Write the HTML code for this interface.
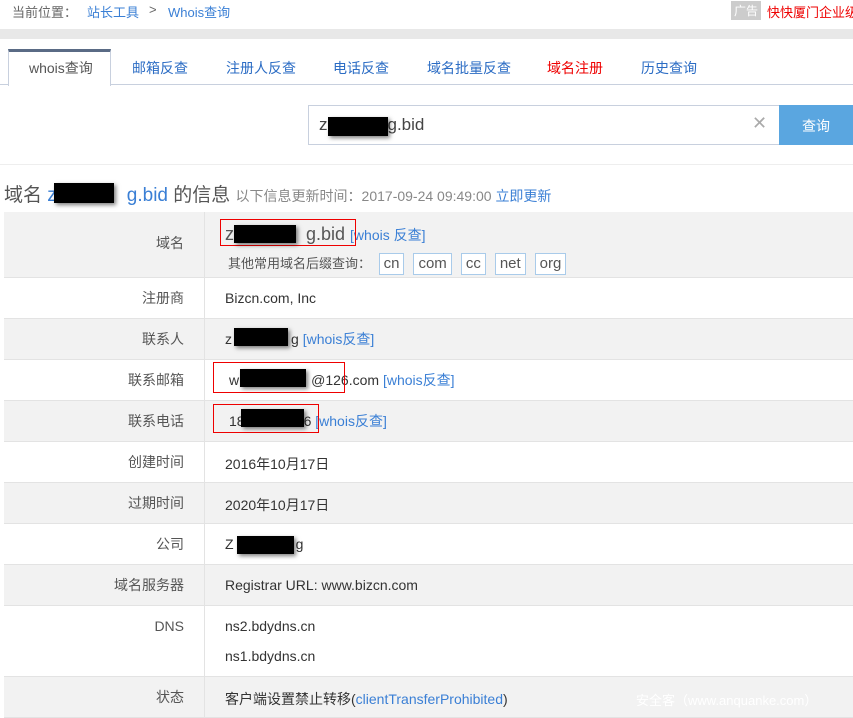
<!DOCTYPE html>
<html><head><meta charset="utf-8"><style>
*{margin:0;padding:0;box-sizing:border-box}
body{width:853px;height:718px;overflow:hidden;background:#fff;font-family:"Liberation Sans","Noto Sans CJK SC",sans-serif;font-size:14px;color:#333;position:relative}
.a{position:absolute;white-space:nowrap}
.blue{color:#3a7fd5}
.g{display:inline-block}
.blk{position:absolute;background:#000;box-shadow:2px 2px 4px rgba(0,0,0,.5)}
.row{position:absolute;left:4px;width:849px;background:#f2f2f2;border-bottom:1px solid #e3e3e3}
.row.w{background:#fff}
.row .l{position:absolute;left:0;width:201px;height:100%;border-right:1px solid #e3e3e3;text-align:right;padding-right:20px;color:#555;font-size:14px}
.row .v{position:absolute;left:221px;font-size:14px;color:#333;white-space:nowrap}
.tab{position:absolute;top:58px;font-size:14px;color:#2b6cc4}
.sfx{display:inline-block;border:1px solid #a9cbea;padding:0 4px;height:22px;line-height:20px;margin-right:9px;color:#555;font-size:15px;background:#fff}
</style></head><body>
<div class="a" style="left:12px;top:2px;color:#666;font-size:13px">当前位置：</div>
<div class="a blue" style="left:87px;top:2px;font-size:13px">站长工具</div>
<div class="a" style="left:149px;top:2px;color:#666;font-size:13px">&gt;</div>
<div class="a blue" style="left:168px;top:2px;font-size:13px">Whois查询</div>
<div class="a" style="left:731px;top:1px;background:#ccc;color:#fff;font-size:12px;padding:1px 3px">广告</div>
<div class="a" style="left:767px;top:2px;color:#e00;font-size:13px">快快厦门企业级</div>
<div class="a" style="left:0;top:29px;width:853px;height:10px;background:#e8e8e8"></div>
<div class="a" style="left:0;top:84px;width:853px;height:1px;background:#c8d0de"></div>
<div class="a" style="left:8px;top:49px;width:103px;height:37px;border:1px solid #c8d0de;border-top:3px solid #5a6b85;border-bottom:none;background:#fff"></div>
<div class="tab" style="left:29px;color:#555">whois查询</div>
<div class="tab" style="left:132px">邮箱反查</div>
<div class="tab" style="left:226px">注册人反查</div>
<div class="tab" style="left:333px">电话反查</div>
<div class="tab" style="left:427px">域名批量反查</div>
<div class="tab" style="left:547px;color:#e00">域名注册</div>
<div class="tab" style="left:641px">历史查询</div>
<div class="a" style="left:308px;top:105px;width:472px;height:40px;border:1px solid #c8d0de"></div>
<div class="a" style="left:319px;top:115px;font-size:17px;color:#444">z<span class="g" style="width:60px"></span>g.bid</div>
<div class="blk" style="left:328px;top:117px;width:60px;height:19px"></div>
<div class="a" style="left:752px;top:113px;font-size:18px;color:#aaa">✕</div>
<div class="a" style="left:779px;top:105px;width:74px;height:40px;background:#5aa6e0;color:#fff;text-align:center;line-height:42px;font-size:14px">查询</div>
<div class="a" style="left:0;top:164px;width:853px;height:1px;background:#eee"></div>
<div class="a" style="left:4px;top:180px;font-size:19px;color:#555">域名 <span class="blue">z<span class="g" style="width:70px"></span>g.bid</span> 的信息 <span style="font-size:14px;color:#888">以下信息更新时间：2017-09-24 09:49:00 <span class="blue">立即更新</span></span></div>
<div class="blk" style="left:54px;top:183px;width:60px;height:20px"></div>

<div class="row" style="top:212px;height:66px"><div class="l" style="line-height:62px">域名</div>
<div class="v" style="top:12px;font-size:18px;color:#555">z<span class="g" style="width:72px"></span>g.bid <span class="blue" style="font-size:14px">[whois 反查]</span></div>
<div class="v" style="top:41px;left:224px;font-size:13px;color:#555">其他常用域名后缀查询： <span class="sfx" style="margin-left:4px">cn</span><span class="sfx">com</span><span class="sfx">cc</span><span class="sfx">net</span><span class="sfx">org</span></div>
</div>
<div class="a" style="left:220px;top:219px;width:136px;height:27px;border:1px solid #e00"></div>
<div class="blk" style="left:234px;top:225px;width:62px;height:18px"></div>

<div class="row w" style="top:278px;height:41px"><div class="l" style="line-height:41px">注册商</div><div class="v" style="top:12px">Bizcn.com, Inc</div></div>
<div class="row" style="top:319px;height:41px"><div class="l" style="line-height:41px">联系人</div><div class="v" style="top:10px">z<span class="g" style="width:59px"></span>g <span class="blue">[whois反查]</span></div></div>
<div class="blk" style="left:234px;top:328px;width:54px;height:18px"></div>
<div class="row w" style="top:360px;height:41px"><div class="l" style="line-height:41px">联系邮箱</div><div class="v" style="top:10px;left:225px">w<span class="g" style="width:72px"></span>@126.com <span class="blue">[whois反查]</span></div></div>
<div class="a" style="left:213px;top:362px;width:132px;height:31px;border:1px solid #e00"></div>
<div class="blk" style="left:240px;top:369px;width:66px;height:18px"></div>
<div class="row" style="top:401px;height:41px"><div class="l" style="line-height:41px">联系电话</div><div class="v" style="top:10px;left:225px">18<span class="g" style="width:59px"></span>6 <span class="blue">[whois反查]</span></div></div>
<div class="a" style="left:213px;top:404px;width:106px;height:29px;border:1px solid #e00"></div>
<div class="blk" style="left:241px;top:409px;width:63px;height:18px"></div>
<div class="row w" style="top:442px;height:41px"><div class="l" style="line-height:41px">创建时间</div><div class="v" style="top:12px">2016年10月17日</div></div>
<div class="row" style="top:483px;height:41px"><div class="l" style="line-height:41px">过期时间</div><div class="v" style="top:12px">2020年10月17日</div></div>
<div class="row w" style="top:524px;height:41px"><div class="l" style="line-height:41px">公司</div><div class="v" style="top:12px">Z<span class="g" style="width:62px"></span>g</div></div>
<div class="blk" style="left:237px;top:536px;width:57px;height:18px"></div>
<div class="row" style="top:565px;height:41px"><div class="l" style="line-height:41px">域名服务器</div><div class="v" style="top:12px">Registrar URL: www.bizcn.com</div></div>
<div class="row w" style="top:606px;height:71px"><div class="l" style="line-height:41px">DNS</div><div class="v" style="top:12px">ns2.bdydns.cn</div><div class="v" style="top:42px">ns1.bdydns.cn</div></div>
<div class="row" style="top:677px;height:41px"><div class="l" style="line-height:41px">状态</div><div class="v" style="top:12px">客户端设置禁止转移(<span class="blue">clientTransferProhibited</span>)</div>
<div class="v" style="left:632px;top:13px;color:#fff;font-size:13px">安全客（www.anquanke.com）</div></div>
</body></html>
